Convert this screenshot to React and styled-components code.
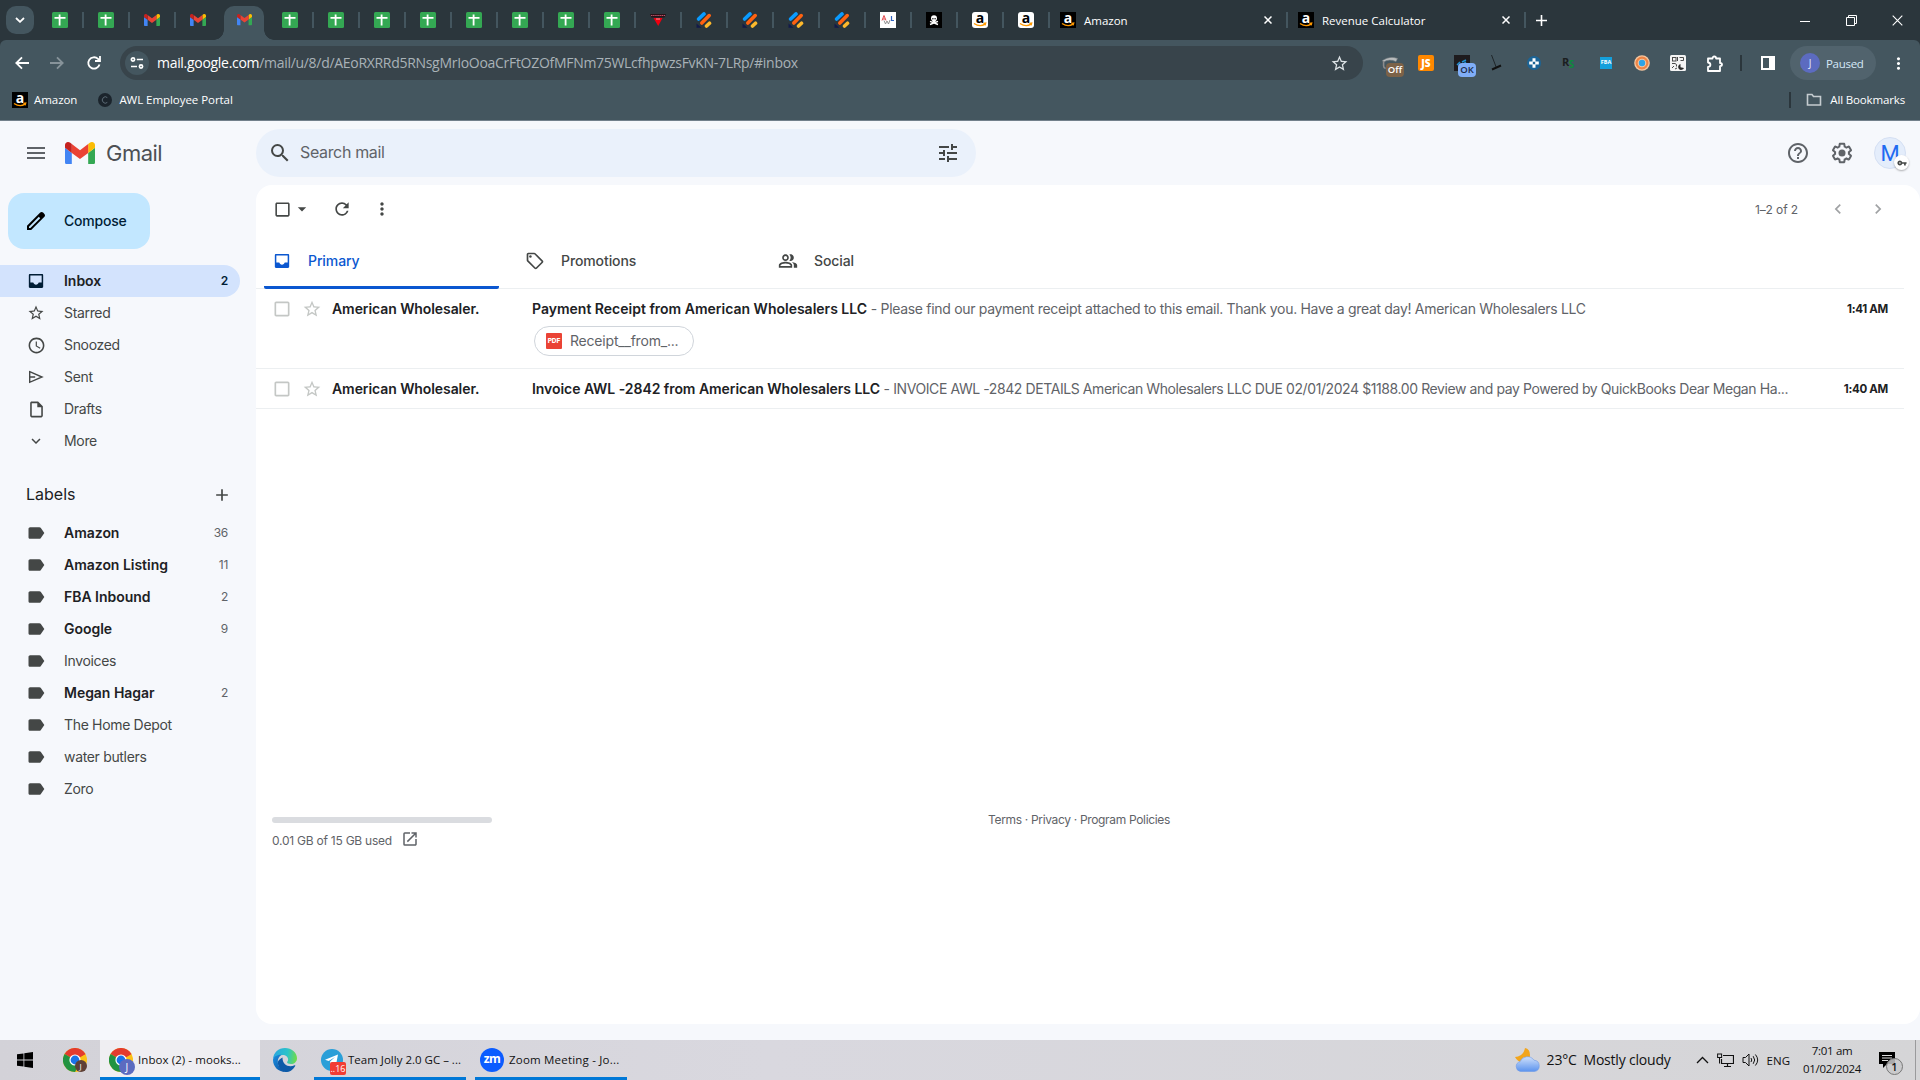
import React from "react";
import styled, { createGlobalStyle } from "styled-components";
import {
  MdAccessTime,
  MdAdd,
  MdArrowDropDown,
  MdCheckBoxOutlineBlank,
  MdChevronLeft,
  MdChevronRight,
  MdExpandMore,
  MdHelpOutline,
  MdLabel,
  MdMenu,
  MdMoreVert,
  MdOpenInNew,
  MdOutlineInsertDriveFile,
  MdOutlinePeopleAlt,
  MdOutlineSell,
  MdRefresh,
  MdSearch,
  MdStarBorder,
  MdTune,
  MdVpnKey,
} from "react-icons/md";

const GlobalStyle = createGlobalStyle`
  body {
    margin: 0;
    overflow: hidden;
    background: #f6f8fc;
  }
  * {
    box-sizing: border-box;
  }
  svg {
    display: block;
    flex: none;
  }
`;

const chromeFont = `"Open Sans", "Noto Sans", sans-serif`;
const mailFont = `Inter, Roboto, sans-serif`;

const Screen = styled.div`
  display: flex;
  flex-direction: column;
  width: 1920px;
  height: 1080px;
  background: #f6f8fc;
`;

/* ---------- browser ---------- */

const TabStrip = styled.div`
  display: flex;
  height: 40px;
  padding-left: 6px;
  background: #2b363c;
  font-family: ${chromeFont};
`;

const TabSearch = styled.div`
  display: flex;
  align-items: center;
  justify-content: center;
  width: 28px;
  height: 28px;
  margin: 6px 4px 0 0;
  border-radius: 10px;
  background: #44565f;
`;

const Tab = styled.div`
  display: flex;
  align-items: center;
  width: 46px;
  height: 40px;
  padding-left: 14px;
`;

const ActiveTab = styled.div`
  position: relative;
  display: flex;
  align-items: center;
  justify-content: center;
  width: 40px;
  height: 34px;
  margin: 6px 4px 0 2px;
  padding-bottom: 6px;
  border-radius: 10px 10px 0 0;
  background: #44565f;
  &::before,
  &::after {
    content: "";
    position: absolute;
    bottom: 0;
    width: 10px;
    height: 10px;
  }
  &::before {
    left: -10px;
    background: radial-gradient(circle at 0 0, transparent 9.5px, #44565f 10px);
  }
  &::after {
    right: -10px;
    background: radial-gradient(circle at 100% 0, transparent 9.5px, #44565f 10px);
  }
`;

const Divider = styled.div`
  width: 2px;
  height: 16px;
  margin-left: 14px;
  background: #44565f;
`;

const WideTab = styled.div`
  display: flex;
  align-items: center;
  width: 238px;
  height: 40px;
  padding-left: 10px;
`;

const TabTitle = styled.span`
  flex: 1;
  margin-left: 8px;
  color: #fff;
  font-size: 11.5px;
  white-space: nowrap;
`;

const NewTab = styled.div`
  display: flex;
  align-items: center;
  width: 32px;
  padding-left: 10px;
`;

const WindowButtons = styled.div`
  display: flex;
  align-items: center;
  gap: 35px;
  margin-left: auto;
  padding-right: 17px;
`;

const Toolbar = styled.div`
  display: flex;
  align-items: center;
  height: 46px;
  padding-left: 12px;
  background: #44565f;
  border-radius: 6px 6px 0 0;
  font-family: ${chromeFont};
`;

const ToolbarBack = styled.div`
  background: #2b363c;
`;

const NavButton = styled.div`
  display: flex;
  align-items: center;
  justify-content: center;
  width: 20px;
  margin-right: ${({ $gap }) => $gap}px;
`;

const Omnibox = styled.div`
  display: flex;
  align-items: center;
  width: 1243px;
  height: 34px;
  padding: 0 14px 0 5px;
  border-radius: 17px;
  background: #38444b;
`;

const SiteInfo = styled.div`
  display: flex;
  align-items: center;
  justify-content: center;
  width: 24px;
  height: 24px;
  border-radius: 50%;
  background: #44565f;
`;

const Url = styled.div`
  flex: 1;
  margin: 0 0 1px 8px;
  color: #a9b2b7;
  font-size: 14px;
  letter-spacing: -0.3px;
  white-space: nowrap;
  b {
    color: #fff;
    font-weight: 400;
  }
`;

const Extensions = styled.div`
  display: flex;
  align-items: center;
  gap: 20px;
  margin-left: 19px;
`;

const Ext = styled.div`
  position: relative;
  width: 16px;
  height: 16px;
`;

const ExtBadge = styled.span`
  position: absolute;
  left: 4px;
  top: 8px;
  width: 18px;
  height: 14px;
  border-radius: 4px;
  background: ${({ $bg }) => $bg};
  color: ${({ $fg }) => $fg};
  font: 600 9.5px/13px ${chromeFont};
  text-align: center;
`;

const ToolDivider = styled.div`
  width: 2px;
  height: 16px;
  margin: 0 19px 0 18px;
  background: #2b363c;
`;

const Profile = styled.div`
  display: flex;
  align-items: center;
  gap: 6px;
  width: 86px;
  height: 34px;
  margin: 0 13px 0 15px;
  padding-left: 10px;
  border-radius: 17px;
  background: #51636d;
  color: #d5e8f7;
  font-size: 11.5px;
  letter-spacing: -0.3px;
`;

const ProfileDot = styled.span`
  width: 20px;
  height: 20px;
  border-radius: 50%;
  background: #5c6bc0;
  color: #e3e8ff;
  font-size: 10px;
  line-height: 20px;
  text-align: center;
`;

const Bookmarks = styled.div`
  display: flex;
  align-items: center;
  height: 35px;
  padding: 0 15px 7px 12px;
  border-bottom: 1px solid #72808b;
  background: #44565f;
  color: #fff;
  font: 11.5px ${chromeFont};
`;

const Bookmark = styled.div`
  display: flex;
  align-items: center;
  gap: 6px;
  margin-right: 20px;
  letter-spacing: -0.05px;
  white-space: nowrap;
`;

const AllBookmarks = styled.div`
  display: flex;
  align-items: center;
  gap: 8px;
  margin-left: auto;
  letter-spacing: -0.15px;
  white-space: nowrap;
`;

const BookmarkDivider = styled.div`
  width: 2px;
  height: 16px;
  margin-right: 7px;
  background: #2b363c;
`;

/* ---------- mail ---------- */

const Mail = styled.div`
  display: flex;
  height: 919px;
  font-family: ${mailFont};
`;

const Sidebar = styled.div`
  width: 256px;
`;

const Brand = styled.div`
  display: flex;
  align-items: center;
  gap: 17px;
  height: 64px;
  padding-left: 24px;
  color: #5f6368;
`;

const BrandName = styled.span`
  margin-left: -6px;
  color: #4d5054;
  font-size: 22px;
  letter-spacing: -0.5px;
`;

const Compose = styled.div`
  display: flex;
  align-items: center;
  gap: 16px;
  width: 142px;
  height: 56px;
  margin: 8px 0 16px 8px;
  padding-left: 16px;
  border-radius: 16px;
  background: #c2e7ff;
  color: #001d35;
  font-size: 14px;
  font-weight: 500;
  letter-spacing: -0.2px;
  span {
    padding-bottom: 1px;
  }
`;

const NavRow = styled.div`
  display: flex;
  align-items: center;
  width: 240px;
  height: 32px;
  padding: 0 12px 0 26px;
  border-radius: 0 16px 16px 0;
  background: ${({ $active }) => ($active ? "#d3e3fd" : "transparent")};
  color: ${({ $active }) => ($active ? "#001d35" : "#444746")};
`;

const NavIcon = styled.div`
  display: flex;
  align-items: center;
  justify-content: center;
  width: 20px;
  margin-right: 18px;
`;

const NavText = styled.span`
  flex: 1;
  padding-bottom: 1px;
  color: ${({ $bold }) => ($bold ? "#202124" : "#444746")};
  font-size: 14px;
  font-weight: ${({ $bold }) => ($bold ? 600 : 400)};
  letter-spacing: ${({ $bold }) => ($bold ? -0.03 : -0.33)}px;
`;

const Count = styled.span`
  padding-bottom: 1px;
  color: ${({ $bold }) => ($bold ? "#001d35" : "#5f6368")};
  font-size: 12px;
  font-weight: ${({ $bold }) => ($bold ? 600 : 400)};
  letter-spacing: -0.3px;
`;

const LabelsHead = styled.div`
  display: flex;
  align-items: center;
  justify-content: space-between;
  height: 40px;
  margin: 18px 24px 2px 26px;
  color: #202124;
  font-size: 16px;
  span {
    padding-bottom: 2px;
  }
  svg {
    color: #444746;
  }
`;

const Content = styled.div`
  flex: 1;
`;

const SearchRow = styled.div`
  display: flex;
  align-items: center;
  height: 64px;
`;

const SearchBox = styled.div`
  display: flex;
  align-items: center;
  width: 720px;
  height: 48px;
  padding: 0 16px 0 12px;
  border-radius: 24px;
  background: #eaf1fb;
  color: #444746;
`;

const SearchHint = styled.span`
  flex: 1;
  margin: 0 0 3px 8px;
  color: #5f6368;
  font-size: 16px;
  letter-spacing: -0.35px;
`;

const HeaderActions = styled.div`
  display: flex;
  align-items: center;
  gap: 20px;
  margin-left: auto;
  padding-right: 14px;
  color: #5f6368;
`;

const Avatar = styled.div`
  position: relative;
  width: 32px;
  height: 32px;
  border: 1px solid #d5e0f3;
  border-radius: 50%;
  background: #e4edfb;
  color: #1f6bf1;
  font: 22px/31px Roboto, sans-serif;
  text-align: center;
`;

const KeyBadge = styled.span`
  position: absolute;
  right: -4px;
  bottom: -2px;
  display: flex;
  align-items: center;
  justify-content: center;
  width: 15px;
  height: 15px;
  border-radius: 50%;
  background: #fff;
  color: #444746;
  box-shadow: 0 1px 2px rgba(0, 0, 0, 0.3);
`;

const Panel = styled.div`
  display: flex;
  flex-direction: column;
  height: 839px;
  border-radius: 16px;
  background: #fff;
`;

const ActionBar = styled.div`
  display: flex;
  align-items: center;
  gap: 20px;
  height: 48px;
  padding: 0 32px 0 17px;
  color: #444746;
`;

const SelectAll = styled.div`
  display: flex;
  align-items: center;
`;

const Pager = styled.div`
  display: flex;
  align-items: center;
  gap: 20px;
  margin-left: auto;
  color: #a0a2a4;
  span {
    margin-right: 10px;
    color: #5f6368;
    font-size: 12px;
    letter-spacing: -0.1px;
  }
`;

const Categories = styled.div`
  display: flex;
  width: 1648px;
  height: 56px;
  padding-left: 8px;
  border-bottom: 1px solid #eceff1;
`;

const Category = styled.div`
  display: flex;
  align-items: center;
  gap: 16px;
  width: 235px;
  height: 56px;
  margin-right: 18px;
  padding-left: 8px;
  border-radius: 0 0 2px 2px;
  background: ${({ $active }) =>
    $active ? "linear-gradient(#0b57d0, #0b57d0) 0 100% / 100% 3px no-repeat" : "none"};
  color: ${({ $active }) => ($active ? "#0b57d0" : "#444746")};
  font-size: 14px;
  font-weight: 500;
  letter-spacing: -0.1px;
  span {
    padding-bottom: 1px;
  }
`;

const MailRow = styled.div`
  display: flex;
  align-items: flex-start;
  width: 1648px;
  height: ${({ $tall }) => ($tall ? 80 : 40)}px;
  padding: 10px 16px 0 16px;
  border-bottom: 1px solid #eceff1;
  color: #c4c7c5;
`;

const RowTools = styled.div`
  display: flex;
  gap: 10px;
`;

const Sender = styled.span`
  width: 200px;
  margin-left: 10px;
  color: #202124;
  font-size: 14px;
  font-weight: 600;
  line-height: 20px;
  letter-spacing: -0.08px;
`;

const Message = styled.div`
  width: 1262px;
`;

const Line = styled.div`
  overflow: hidden;
  color: #5f6368;
  font-size: 14px;
  line-height: 20px;
  white-space: nowrap;
`;

const Subject = styled.span`
  color: #202124;
  font-weight: 600;
  letter-spacing: ${({ $ls }) => $ls || 0}px;
`;

const Snippet = styled.span`
  letter-spacing: ${({ $ls }) => $ls || 0}px;
`;

const Time = styled.span`
  margin-left: auto;
  color: #202124;
  font-size: 11.5px;
  font-weight: 700;
  line-height: 20px;
  letter-spacing: -0.3px;
`;

const Chip = styled.div`
  display: flex;
  align-items: center;
  gap: 8px;
  width: 160px;
  height: 30px;
  margin: 7px 0 0 2px;
  padding-left: 11px;
  border: 1px solid #d0d5db;
  border-radius: 15px;
  color: #5f6368;
  font-size: 14px;
  letter-spacing: -0.2px;
`;

const ChipName = styled.span`
  padding-bottom: 1px;
`;

const Pdf = styled.span`
  width: 16px;
  height: 16px;
  border-radius: 1px;
  background: #ea4335;
  color: #fff;
  font: 800 6.5px/16px ${mailFont};
  letter-spacing: 0;
  text-align: center;
`;

const Footer = styled.div`
  display: flex;
  margin-top: 408px;
  padding-left: 16px;
  color: #5f6368;
  font-size: 12px;
`;

const Storage = styled.div`
  width: 220px;
`;

const StorageBar = styled.div`
  height: 6px;
  border-radius: 3px;
  background: #dadce0;
`;

const StorageText = styled.div`
  display: flex;
  align-items: center;
  gap: 9px;
  margin-top: 7px;
  letter-spacing: -0.24px;
  span {
    padding-top: 2px;
  }
`;

const Legal = styled.div`
  margin: -5px 0 0 496px;
  letter-spacing: -0.33px;
`;

/* ---------- taskbar ---------- */

const Taskbar = styled.div`
  display: flex;
  align-items: center;
  height: 40px;
  background: linear-gradient(90deg, #d3d2d8, #d9d8df 40%, #d5d5d7);
  color: #111;
  font: 11.5px ${chromeFont};
`;

const TaskIcon = styled.div`
  display: flex;
  align-items: center;
  justify-content: center;
  width: ${({ $w }) => $w}px;
  padding-right: ${({ $pr }) => $pr || 0}px;
`;

const Task = styled.div`
  display: flex;
  align-items: center;
  gap: 5px;
  width: ${({ $w }) => $w}px;
  height: 40px;
  margin-right: ${({ $gap }) => $gap || 0}px;
  padding: 3px 0 0 ${({ $pad }) => $pad}px;
  border-bottom: 3px solid #0078d7;
  background: ${({ $active }) => ($active ? "#efeef2" : "transparent")};
  letter-spacing: ${({ $ls }) => $ls || 0}px;
  white-space: nowrap;
`;

const TaskName = styled.span`
  padding-bottom: 1px;
`;

const Tray = styled.div`
  display: flex;
  align-items: center;
  height: 40px;
  margin-left: auto;
`;

const Weather = styled.span`
  margin: 0 25px 1px 7px;
  font-size: 14px;
  letter-spacing: -0.2px;
  white-space: pre;
`;

const TrayIcons = styled.div`
  display: flex;
  align-items: center;
  gap: 8px;
`;

const Clock = styled.div`
  width: 60px;
  margin: 0 17px 1px 12px;
  letter-spacing: -0.3px;
  line-height: 18px;
  text-align: center;
  white-space: nowrap;
`;

const PeekEdge = styled.div`
  width: 5px;
  height: 40px;
  margin-left: 12px;
  border-left: 1px solid #9a9a9c;
`;

/* ---------- drawings ---------- */

const Sheets = () => (
  <svg width="16" height="16" viewBox="0 0 16 16">
    <rect width="16" height="16" rx="1.5" fill="#34a853" />
    <path d="M2.5 5.8h11M7.6 2.5v11" stroke="#fff" strokeWidth="1.8" />
  </svg>
);

const GmailLogo = ({ w }) => (
  <svg width={w} height={w * 0.75} viewBox="52 42 88 66">
    <path fill="#4285f4" d="M58 108h14V74L52 59v43c0 3.320 2.690 6 6 6" />
    <path fill="#34a853" d="M120 108h14c3.320 0 6-2.690 6-6V59l-20 15" />
    <path fill="#fbbc04" d="M120 48v26l20-15v-8c0-7.420-8.470-11.650-14.400-7.200" />
    <path fill="#ea4335" d="M72 74V48l24 18 24-18v26L96 92" />
    <path fill="#c5221f" d="M52 51v8l20 15V48l-5.600-4.200c-5.940-4.450-14.400-.22-14.400 7.200" />
  </svg>
);

const AmazonBox = styled.span`
  position: relative;
  width: 16px;
  height: 16px;
  border-radius: ${({ $light }) => ($light ? 3 : 0)}px;
  background: ${({ $light }) => ($light ? "#fff" : "#000")};
  color: ${({ $light }) => ($light ? "#000" : "#fff")};
  font: 700 14px/11px "Open Sans", sans-serif;
  letter-spacing: 0;
  text-align: center;
  svg {
    position: absolute;
    left: 0;
    top: 0;
  }
`;

const AmazonIcon = ({ light }) => (
  <AmazonBox $light={light}>
    a
    <svg width="16" height="16" viewBox="0 0 16 16">
      <path
        d="M2 11.500q6 4 11 .6M11.400 11.300l2.300-.2-.6 2.200"
        fill="none"
        stroke="#f90"
        strokeWidth="1.300"
      />
    </svg>
  </AmazonBox>
);

const RedDiamond = () => (
  <svg width="16" height="16" viewBox="0 0 16 16">
    <path d="M0 2h16l-1.500 3.500h-13z" fill="#2a1016" />
    <path d="M1 3.500h14" stroke="#b8566a" strokeWidth="1.200" strokeDasharray="1.500 .6" />
    <path d="M3.500 6h9L8.200 14z" fill="#f00010" />
    <path d="M6 7h4" stroke="#ffc0c0" strokeWidth=".8" />
  </svg>
);

const Stripes = () => (
  <svg width="16" height="16" viewBox="0 0 16 16">
    <g strokeLinecap="round" strokeWidth="3.600">
      <path d="M2.600 7L8 1.900" stroke="#0a9bff" />
      <path d="M5.800 11L13.200 3.600" stroke="#ff6210" />
      <path d="M10.500 14l3-2.800" stroke="#fdb92c" />
    </g>
    <path d="M.5 11.500v4.200h5z" fill="#121a4a" />
  </svg>
);

const AwlIcon = () => (
  <svg width="16" height="16" viewBox="0 0 16 16">
    <rect width="16" height="16" fill="#fff" />
    <path d="M2 8.500l2-5 2 5M3 7h2" stroke="#e2474b" strokeWidth="1" fill="none" />
    <path d="M4 8.500l1.500 3.500L7 9l1.500 3L10 8" stroke="#888" strokeWidth=".9" fill="none" />
    <path d="M11.500 4v4.500H14" stroke="#2f62c0" strokeWidth="1.200" fill="none" />
  </svg>
);

const Skull = () => (
  <svg width="16" height="16" viewBox="0 0 16 16">
    <rect width="16" height="16" fill="#000" />
    <path d="M4 9.300l8 3.200M12 9.300l-8 3.200" stroke="#fff" strokeWidth="1.400" />
    <circle cx="8" cy="6.300" r="3" fill="#fff" />
    <rect x="6.500" y="8" width="3" height="2.200" fill="#fff" />
    <circle cx="6.900" cy="6.700" r=".7" />
    <circle cx="9.100" cy="6.700" r=".7" />
  </svg>
);

const Cross = ({ size = 8, color = "#fff", sw = 1.5 }) => (
  <svg width={size} height={size} viewBox="0 0 8 8">
    <path d="M.5 .5l7 7M7.500 .5l-7 7" stroke={color} strokeWidth={(sw * 8) / size} />
  </svg>
);

const Stroke = ({ w = 16, h = 16, d, color = "#fff", sw = 1.8 }) => (
  <svg width={w} height={h} viewBox={`0 0 ${w} ${h}`}>
    <path d={d} fill="none" stroke={color} strokeWidth={sw} />
  </svg>
);

const SiteInfoIcon = () => (
  <svg width="14" height="12" viewBox="0 0 14 12" fill="none" stroke="#fff" strokeWidth="1.700">
    <circle cx="3" cy="2.500" r="1.600" />
    <path d="M6.800 2.500H13M1 9.500h6" />
    <circle cx="11" cy="9.500" r="1.600" />
  </svg>
);

const ExtLamp = () => (
  <svg width="16" height="16" viewBox="0 0 16 16" fill="none">
    <path d="M.5 5.500Q8 .5 15.500 3.500L14 6.500Q7 3.500 1.500 7z" fill="#b9bcbd" stroke="#7f8588" strokeWidth=".6" />
    <path d="M1.600 6v5q0 2 2 2.500" stroke="#8c8c8c" strokeWidth="1.600" />
  </svg>
);

const ExtJs = styled.div`
  width: 16px;
  height: 16px;
  border-radius: 2px;
  background: #ff8800;
  color: #fff;
  font: 800 10px/16px "Open Sans", sans-serif;
  text-align: center;
`;

const ExtDark = () => (
  <svg width="16" height="16" viewBox="0 0 16 16">
    <rect width="16" height="16" fill="#1e1b1e" />
    <path d="M3 10l3-3M8 7l4-2M9 9l3-2" stroke="#1f8fd0" strokeWidth="1.500" />
  </svg>
);

const ExtBlade = () => (
  <svg width="16" height="16" viewBox="0 0 16 16">
    <path d="M1.500 0l5 13" stroke="#1a1f22" strokeWidth=".9" />
    <path d="M2 14.500l9-4" stroke="#111" strokeWidth="2" />
  </svg>
);

const ExtPlus = () => (
  <svg width="16" height="16" viewBox="0 0 16 16">
    <circle cx="8" cy="8" r="7" fill="#1c6496" />
    <path d="M8 3.200v3.600M8 9.200v3.600M3.200 8h3.600M9.200 8h3.600" stroke="#fff" strokeWidth="3" />
  </svg>
);

const ExtRs = styled.div`
  color: #1b1e20;
  font: 700 11px/14px "Open Sans", sans-serif;
  letter-spacing: -0.5px;
  white-space: nowrap;
  span {
    position: relative;
    top: 2px;
    color: #0d8a3c;
    font-size: 10px;
  }
`;

const ExtFba = styled.div`
  width: 12px;
  height: 12px;
  margin: 2px;
  background: #14a0dc;
  color: #fff;
  font: 700 5.5px/11px "Open Sans", sans-serif;
  text-align: center;
`;

const ExtRing = () => (
  <svg width="16" height="16" viewBox="0 0 16 16">
    <circle cx="8" cy="8" r="7.800" fill="#f5c7a0" />
    <circle cx="8" cy="8" r="5.400" fill="none" stroke="#ee8445" strokeWidth="2.200" />
    <circle cx="8" cy="8" r="3.200" fill="#2ea3e6" />
  </svg>
);

const ExtQr = () => (
  <svg width="16" height="16" viewBox="0 0 16 16">
    <rect width="16" height="16" rx="1.500" fill="#f4f4f4" />
    <g fill="none" stroke="#4a4a4a" strokeWidth="1">
      <rect x="2.500" y="2.500" width="3.500" height="3.500" />
      <path d="M7.500 2v4M9.500 2.500h4v3h-3M2 8.500h3l1.500 1v2M2 13l2-2M5 14l2-1" />
    </g>
    <path d="M10.500 9a3 3 0 1 0 3.500 4l-3.500-.8z" fill="#2a2a2a" />
  </svg>
);

const Puzzle = () => (
  <svg width="18" height="18" viewBox="0 0 18 18">
    <path
      d="M2 3.500h4.500q0-2 1.800-2t1.800 2H14V8q2 0 2 1.600t-2 1.600V16H2v-4q2.400-.2 2.400-2.200T2 7.500z"
      fill="none"
      stroke="#fff"
      strokeWidth="1.800"
      strokeLinejoin="round"
    />
  </svg>
);

const SidePanel = () => (
  <svg width="14" height="14" viewBox="0 0 14 14">
    <rect x="1" y="1" width="12" height="12" fill="none" stroke="#fff" strokeWidth="2" />
    <rect x="8" y="1" width="5" height="12" fill="#fff" />
  </svg>
);

const DarkC = () => (
  <svg width="16" height="16" viewBox="-1 -1 16 16">
    <circle cx="7" cy="7" r="7" fill="#1b242c" />
    <path d="M9.300 4.600a3 3.200 0 1 0 0 4.800" fill="none" stroke="#5b6a75" />
  </svg>
);

const Pencil = () => (
  <svg width="24" height="24" viewBox="0 0 24 24" fill="#000">
    <path d="M20.410 4.940l-1.350-1.350c-.78-.78-2.050-.78-2.830 0L3 16.820V21h4.180L20.410 7.770c.79-.78.79-2.050 0-2.830zm-14 14.120L5 19v-1.360l9.820-9.820 1.410 1.410-9.820 9.830z" />
  </svg>
);

// tray whose lower part is solid
const InboxIcon = () => (
  <svg width="20" height="20" viewBox="0 0 24 24" fill="currentColor">
    <path
      fillRule="evenodd"
      d="M4.800 3.600h14.400c.9 0 1.400.6 1.400 1.400v14c0 .8-.5 1.400-1.400 1.400H4.800c-.9 0-1.400-.6-1.400-1.400V5c0-.8.5-1.400 1.400-1.400zM5.200 5.400v8.400h3.500c.5 1.500 1.700 2.600 3.300 2.600s2.800-1.100 3.300-2.600h3.500V5.400z"
    />
  </svg>
);

const SendIcon = () => (
  <svg width="20" height="20" viewBox="0 0 20 20">
    <path
      d="M3.700 4.700L16 10 3.700 15.300zM3.700 10h5.500"
      fill="none"
      stroke="currentColor"
      strokeWidth="1.400"
    />
  </svg>
);

const Gear = () => (
  <svg width="24" height="24" viewBox="0 0 24 24" fill="currentColor">
    <path d="M13.850 22.250h-3.700c-.74 0-1.360-.54-1.450-1.270l-.27-1.890c-.27-.14-.53-.29-.79-.46l-1.800.72c-.7.26-1.470-.03-1.810-.65L2.200 15.530c-.35-.66-.2-1.440.36-1.880l1.530-1.190c-.01-.15-.02-.3-.02-.46 0-.15.01-.31.02-.46l-1.520-1.190c-.59-.45-.74-1.260-.37-1.880l1.850-3.190c.34-.62 1.110-.9 1.790-.63l1.810.73c.26-.17.52-.32.780-.46l.27-1.910c.09-.7.71-1.250 1.440-1.250h3.700c.74 0 1.360.54 1.450 1.270l.27 1.890c.27.14.53.29.79.46l1.800-.72c.71-.26 1.480.03 1.820.65l1.840 3.180c.36.66.2 1.440-.36 1.880l-1.520 1.190c.01.15.02.3.02.46s-.01.31-.02.46l1.520 1.190c.56.45.72 1.230.37 1.860l-1.860 3.220c-.34.62-1.110.9-1.800.63l-1.800-.72c-.26.17-.52.32-.78.46l-.27 1.910c-.1.680-.72 1.220-1.460 1.220zm-3.230-2h2.760l.37-2.550.53-.22c.44-.18.88-.44 1.340-.78l.45-.34 2.380.96 1.380-2.400-2.030-1.580.07-.56c.03-.26.06-.51.06-.78s-.03-.53-.06-.78l-.07-.56 2.030-1.580-1.390-2.400-2.390.96-.45-.35c-.42-.32-.87-.58-1.330-.77l-.52-.22-.37-2.550h-2.760l-.37 2.550-.53.21c-.44.19-.88.44-1.340.79l-.45.33-2.380-.95-1.390 2.390 2.030 1.580-.07.56a7 7 0 0 0-.06.79c0 .26.02.53.06.78l.07.56-2.030 1.580 1.380 2.400 2.390-.96.45.35c.43.33.86.58 1.330.77l.53.22.38 2.550z" />
    <circle cx="12" cy="12" r="3.500" />
  </svg>
);

const WindowsLogo = () => (
  <svg width="16" height="16" viewBox="0 0 16 16">
    <path d="M0 2.300l6.500-.9v6.100H0zM7.300 1.300L16 0v7.500H7.300zM0 8.400h6.500v6.200L0 13.700zM7.300 8.400H16V16l-8.700-1.300z" />
  </svg>
);

const ChromeBadge = styled.div`
  position: relative;
  width: 24px;
  height: 24px;
  span {
    position: absolute;
    right: ${({ $big }) => ($big ? -2 : 0)}px;
    bottom: ${({ $big }) => ($big ? -3 : 0)}px;
    width: ${({ $big }) => ($big ? 16 : 12)}px;
    height: ${({ $big }) => ($big ? 16 : 12)}px;
    border-radius: 50%;
    background: ${({ $big }) => ($big ? "#5c6bc0" : "#5d4037")};
    color: #fff;
    font: ${({ $big }) => ($big ? "10px/16px" : "8px/12px")} ${chromeFont};
    text-align: center;
  }
`;

const Chrome = ({ big }) => (
  <ChromeBadge $big={big}>
    <svg width="24" height="24" viewBox="0 0 24 24">
      <circle cx="12" cy="12" r="12" fill="#fbc116" />
      <path d="M12 12L1.600 6A12 12 0 0 1 22.400 6z" fill="#e33b2e" />
      <path d="M12 6h10.400L12 12z" fill="#e33b2e" />
      <path d="M12 12L1.600 6A12 12 0 0 0 12 24l5.200-9z" fill="#229342" />
      <circle cx="12" cy="12" r="5.600" fill="#fff" />
      <circle cx="12" cy="12" r="4.400" fill="#1a73e8" />
    </svg>
    <span>J</span>
  </ChromeBadge>
);

const Edge = () => (
  <svg width="24" height="24" viewBox="0 0 24 24">
    <defs>
      <linearGradient id="edgeTop" x1="0" x2="1" y1=".3" y2=".4">
        <stop offset="0" stopColor="#2aa7e0" />
        <stop offset=".6" stopColor="#2cc3c9" />
        <stop offset="1" stopColor="#6fdc4a" />
      </linearGradient>
      <linearGradient id="edgeLow" x1="0" x2="1" y1="0" y2="1">
        <stop offset="0" stopColor="#1b8fe0" />
        <stop offset="1" stopColor="#0c4f9e" />
      </linearGradient>
    </defs>
    <path
      d="M0 11C.5 4.500 5.500 0 12 0s12 4.800 12 10.200c0 3.500-2.700 5.800-6 5.800-2.500 0-3.900-.8-3.900-1.700 0-.8 1-1.100 1-3 0-2.300-2.300-4.300-5.500-4.300C4.500 7 .5 10 0 11z"
      fill="url(#edgeTop)"
    />
    <path
      d="M0 12c0-3 4-5.500 8.500-5.200C6 8.500 4.500 11 4.800 14.500 5.200 19 8.500 22.500 12.500 24 5.500 24 0 19 0 12z"
      fill="url(#edgeLow)"
    />
    <path
      d="M9.500 9.500C7.500 11 4.500 12 4.900 15.500 5.500 20.500 9 23.700 12.500 24c4.500 0 7.600-2.300 9.700-6.100.3-.5-.2-.8-.6-.6-5.600 2.300-12.300 0-12.100-7.800z"
      fill="#0d5aa8"
    />
  </svg>
);

const TelegramBox = styled.div`
  position: relative;
  width: 22px;
  height: 22px;
  span {
    position: absolute;
    left: 9px;
    top: 13px;
    width: 16px;
    height: 13px;
    border-radius: 2px;
    background: #f23c34;
    color: #fff;
    font: 9px/13px ${chromeFont};
    letter-spacing: 0;
    text-align: center;
  }
`;

const Telegram = () => (
  <TelegramBox>
    <svg width="22" height="22" viewBox="0 0 22 22">
      <circle cx="11" cy="11" r="11" fill="#2a9fd8" />
      <path d="M4 10.800L17 5.600 14.900 16.600l-3.600-2.700-1.900 1.900-.3-3.400 5-4.500-6.400 4z" fill="#fff" />
    </svg>
    <span>..16</span>
  </TelegramBox>
);

const ZoomBadge = styled.div`
  width: 24px;
  height: 24px;
  border-radius: 50%;
  background: #0b5cff;
  color: #fff;
  font: 700 12px/22px "Open Sans", sans-serif;
  letter-spacing: -0.5px;
  text-align: center;
`;

const WeatherIcon = () => (
  <svg width="25" height="24" viewBox="0 0 25 24">
    <defs>
      <linearGradient id="cloud" x1="0" x2="0" y1="0" y2="1">
        <stop offset="0" stopColor="#cfe0fb" />
        <stop offset="1" stopColor="#5b93ee" />
      </linearGradient>
    </defs>
    <path d="M10 0q-1 5-4 7t-6 2q3 6 9 5t6-7-5-7" fill="#f2a51d" />
    <path
      d="M5.500 23.500a5 5 0 0 1-.5-9.800 8 8 0 0 1 14-1.500 5.700 5.700 0 0 1 .5 11.300z"
      fill="url(#cloud)"
      stroke="#6f9be8"
      strokeWidth=".6"
    />
  </svg>
);

const Monitor = () => (
  <svg width="17" height="15" viewBox="0 0 17 15" fill="none" stroke="#111">
    <path d="M6 2.500h10.500v8H4.500V6M10.500 10.500v3M7 13.500h7" strokeWidth="1.200" />
    <rect x=".6" y="1" width="4" height="3.500" />
    <path d="M2.500 4.500v6" />
  </svg>
);

const Speaker = () => (
  <svg width="17" height="14" viewBox="0 0 17 14" fill="none" stroke="#111">
    <path d="M1 4.500h2.500L7 1v12L3.500 9.500H1z" />
    <path d="M9 5q1.500 2 0 4M11.200 3.200q3 3.800 0 7.600M13.400 1.500q4.600 5.500 0 11" />
  </svg>
);

const NoticeBox = styled.div`
  position: relative;
  width: 24px;
  height: 18px;
  span {
    position: absolute;
    right: 0;
    bottom: -6px;
    width: 17px;
    height: 17px;
    border: 1px solid #777;
    border-radius: 50%;
    background: rgba(200, 200, 202, 0.85);
    font: 600 11px/15px ${chromeFont};
    text-align: center;
  }
`;

const Notice = () => (
  <NoticeBox>
    <svg width="16" height="18" viewBox="0 0 16 18">
      <path d="M0 1h16v12H8l-4 4v-4H0z" />
      <path d="M3 4.500h10M3 7h10M3 9.500h6" stroke="#ddd" />
    </svg>
    <span>1</span>
  </NoticeBox>
);

/* ---------- data ---------- */

const favicons = [
  Sheets, Sheets, GmailLogo, GmailLogo, "active",
  Sheets, Sheets, Sheets, Sheets, Sheets, Sheets, Sheets, Sheets,
  RedDiamond, Stripes, Stripes, Stripes, Stripes, AwlIcon, Skull,
  AmazonIcon, AmazonIcon,
];

const folders = [
  { icon: <InboxIcon />, name: "Inbox", count: 2, active: true },
  { icon: <MdStarBorder size={18} />, name: "Starred" },
  { icon: <MdAccessTime size={19} />, name: "Snoozed" },
  { icon: <SendIcon />, name: "Sent" },
  { icon: <MdOutlineInsertDriveFile size={19} />, name: "Drafts" },
  { icon: <MdExpandMore size={18} />, name: "More" },
];

const labels = [
  { name: "Amazon", count: 36 },
  { name: "Amazon Listing", count: 11 },
  { name: "FBA Inbound", count: 2 },
  { name: "Google", count: 9 },
  { name: "Invoices" },
  { name: "Megan Hagar", count: 2 },
  { name: "The Home Depot" },
  { name: "water butlers" },
  { name: "Zoro" },
];

function App() {
  return (
    <Screen>
      <GlobalStyle />
      <TabStrip>
        <TabSearch>
          <Stroke w={10} h={6} d="M1 1l4 3.800L9 1" />
        </TabSearch>
        {favicons.map((Icon, i) =>
          Icon === "active" ? (
            <ActiveTab key={i}>
              <GmailLogo w={15} />
            </ActiveTab>
          ) : (
            <Tab key={i}>
              <Icon w={16} light />
              {i !== 3 && <Divider />}
            </Tab>
          )
        )}
        <WideTab>
          <AmazonIcon />
          <TabTitle>Amazon</TabTitle>
          <Cross />
          <Divider />
        </WideTab>
        <WideTab>
          <AmazonIcon />
          <TabTitle>Revenue Calculator</TabTitle>
          <Cross />
          <Divider />
        </WideTab>
        <NewTab>
          <Stroke w={11} h={11} d="M5.500 0v11M0 5.500h11" sw={1.600} />
        </NewTab>
        <WindowButtons>
          <Stroke w={11} h={11} d="M0 6.500h10" sw={1} />
          <Stroke w={11} h={11} d="M.5 2.500h8v8h-8zM2.500 2.500v-2h8v8h-2" sw={1} />
          <Cross size={11} sw={1.100} />
        </WindowButtons>
      </TabStrip>

      <ToolbarBack>
        <Toolbar>
          <NavButton $gap={15}>
            <Stroke d="M15 8H2.500M8 2.300L2.300 8 8 13.700" />
          </NavButton>
          <NavButton $gap={17}>
            <Stroke d="M1 8h12.500M8 2.300L13.700 8 8 13.700" color="#87939a" />
          </NavButton>
          <NavButton $gap={16}>
            <Stroke d="M13.500 9.500A5.700 5.700 0 1 1 12 3.900l1.600 1.600M14 1v5H9" />
          </NavButton>
          <Omnibox>
            <SiteInfo>
              <SiteInfoIcon />
            </SiteInfo>
            <Url>
              <b>mail.google.com</b>
              /mail/u/8/d/AEoRXRRd5RNsgMrIoOoaCrFtOZOfMFNm75WLcfhpwzsFvKN-7LRp/#inbox
            </Url>
            <MdStarBorder size={19} color="#dde3e6" />
          </Omnibox>
          <Extensions>
            <Ext>
              <ExtLamp />
              <ExtBadge $bg="#7c6248" $fg="#fff">Off</ExtBadge>
            </Ext>
            <Ext><ExtJs>JS</ExtJs></Ext>
            <Ext>
              <ExtDark />
              <ExtBadge $bg="#80aef8" $fg="#1c2b4a">OK</ExtBadge>
            </Ext>
            <Ext><ExtBlade /></Ext>
            <Ext><ExtPlus /></Ext>
            <Ext><ExtRs>R<span>S</span></ExtRs></Ext>
            <Ext><ExtFba>FBA</ExtFba></Ext>
            <Ext><ExtRing /></Ext>
            <Ext><ExtQr /></Ext>
            <Ext><Puzzle /></Ext>
          </Extensions>
          <ToolDivider />
          <SidePanel />
          <Profile>
            <ProfileDot>J</ProfileDot>
            Paused
          </Profile>
          <MdMoreVert size={19} color="#fff" />
        </Toolbar>
      </ToolbarBack>

      <Bookmarks>
        <Bookmark>
          <AmazonIcon />
          Amazon
        </Bookmark>
        <Bookmark>
          <DarkC />
          AWL Employee Portal
        </Bookmark>
        <AllBookmarks>
          <BookmarkDivider />
          <Stroke d="M1.500 13V2.500h4.500l1.500 2h7V13z" color="#c5ccd0" sw={1.600} />
          All Bookmarks
        </AllBookmarks>
      </Bookmarks>

      <Mail>
        <Sidebar>
          <Brand>
            <MdMenu size={24} />
            <GmailLogo w={30} />
            <BrandName>Gmail</BrandName>
          </Brand>
          <Compose>
            <Pencil />
            <span>Compose</span>
          </Compose>
          {folders.map((f) => (
            <NavRow key={f.name} $active={f.active}>
              <NavIcon>{f.icon}</NavIcon>
              <NavText $bold={f.active}>{f.name}</NavText>
              {f.count && <Count $bold>{f.count}</Count>}
            </NavRow>
          ))}
          <LabelsHead>
            <span>Labels</span>
            <MdAdd size={20} />
          </LabelsHead>
          {labels.map((l) => (
            <NavRow key={l.name}>
              <NavIcon>
                <MdLabel size={20} />
              </NavIcon>
              <NavText $bold={!!l.count}>{l.name}</NavText>
              {l.count && <Count>{l.count}</Count>}
            </NavRow>
          ))}
        </Sidebar>

        <Content>
          <SearchRow>
            <SearchBox>
              <MdSearch size={24} />
              <SearchHint>Search mail</SearchHint>
              <MdTune size={24} />
            </SearchBox>
            <HeaderActions>
              <MdHelpOutline size={24} />
              <Gear />
              <Avatar>
                M
                <KeyBadge>
                  <MdVpnKey size={10} />
                </KeyBadge>
              </Avatar>
            </HeaderActions>
          </SearchRow>

          <Panel>
            <ActionBar>
              <SelectAll>
                <MdCheckBoxOutlineBlank size={19} />
                <MdArrowDropDown size={20} />
              </SelectAll>
              <MdRefresh size={20} />
              <MdMoreVert size={20} />
              <Pager>
                <span>1–2 of 2</span>
                <MdChevronLeft size={20} />
                <MdChevronRight size={20} />
              </Pager>
            </ActionBar>

            <Categories>
              <Category $active>
                <InboxIcon />
                <span>Primary</span>
              </Category>
              <Category>
                <MdOutlineSell size={20} />
                <span>Promotions</span>
              </Category>
              <Category>
                <MdOutlinePeopleAlt size={20} />
                <span>Social</span>
              </Category>
            </Categories>

            <MailRow $tall>
              <RowTools>
                <MdCheckBoxOutlineBlank size={20} />
                <MdStarBorder size={20} />
              </RowTools>
              <Sender>American Wholesaler.</Sender>
              <Message>
                <Line>
                  <Subject>Payment Receipt from American Wholesalers LLC</Subject>
                  <Snippet $ls={-0.31}>
                    {" "}- Please find our payment receipt attached to this email. Thank you.
                    Have a great day! American Wholesalers LLC
                  </Snippet>
                </Line>
                <Chip>
                  <Pdf>PDF</Pdf>
                  <ChipName>Receipt__from_...</ChipName>
                </Chip>
              </Message>
              <Time>1:41 AM</Time>
            </MailRow>

            <MailRow>
              <RowTools>
                <MdCheckBoxOutlineBlank size={20} />
                <MdStarBorder size={20} />
              </RowTools>
              <Sender>American Wholesaler.</Sender>
              <Message>
                <Line>
                  <Subject $ls={-0.05}>Invoice AWL -2842 from American Wholesalers LLC</Subject>
                  <Snippet $ls={-0.41}>
                    {" "}- INVOICE AWL -2842 DETAILS American Wholesalers LLC DUE 02/01/2024
                    $1188.00 Review and pay Powered by QuickBooks Dear Megan Ha...
                  </Snippet>
                </Line>
              </Message>
              <Time>1:40 AM</Time>
            </MailRow>

            <Footer>
              <Storage>
                <StorageBar />
                <StorageText>
                  <span>0.01 GB of 15 GB used</span>
                  <MdOpenInNew size={18} />
                </StorageText>
              </Storage>
              <Legal>Terms · Privacy · Program Policies</Legal>
            </Footer>
          </Panel>
        </Content>
      </Mail>

      <Taskbar>
        <TaskIcon $w={49}>
          <WindowsLogo />
        </TaskIcon>
        <TaskIcon $w={51}>
          <Chrome />
        </TaskIcon>
        <Task $w={160} $pad={9} $ls={0.08} $active>
          <Chrome big />
          <TaskName>Inbox (2) - mooks...</TaskName>
        </Task>
        <TaskIcon $w={54} $pr={4}>
          <Edge />
        </TaskIcon>
        <Task $w={152} $pad={7} $gap={9}>
          <Telegram />
          <TaskName>Team Jolly 2.0 GC – ...</TaskName>
        </Task>
        <Task $w={152} $pad={5} $ls={0.2}>
          <ZoomBadge>zm</ZoomBadge>
          <TaskName>Zoom Meeting - Jo...</TaskName>
        </Task>
        <Tray>
          <WeatherIcon />
          <Weather>23°C  Mostly cloudy</Weather>
          <TrayIcons>
            <Stroke w={13} h={8} d="M1 7l5.500-5.500L12 7" color="#111" sw={1.300} />
            <Monitor />
            <Speaker />
            <span>ENG</span>
          </TrayIcons>
          <Clock>
            7:01 am
            <br />
            01/02/2024
          </Clock>
          <Notice />
          <PeekEdge />
        </Tray>
      </Taskbar>
    </Screen>
  );
}

export default App;
